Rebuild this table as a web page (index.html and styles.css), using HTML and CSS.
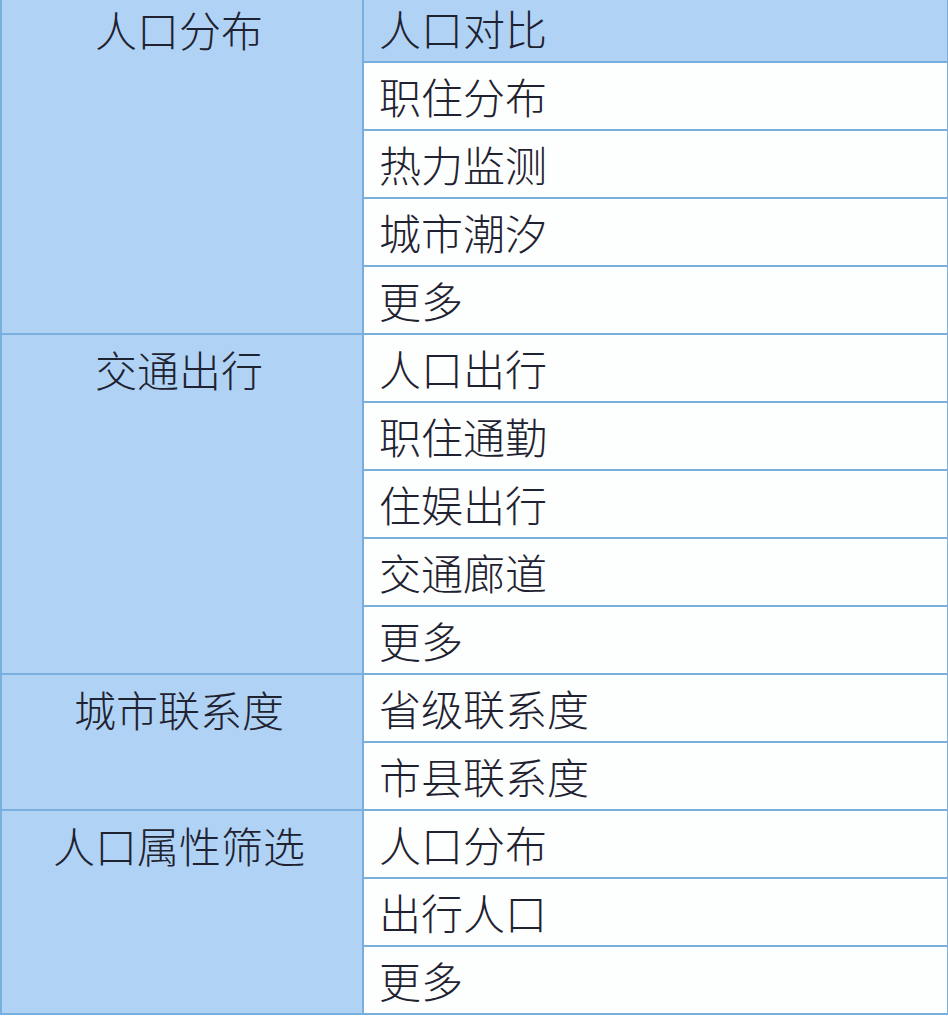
FILE: index.html
```html
<!DOCTYPE html>
<html lang="zh">
<head>
<meta charset="utf-8">
<title>功能列表</title>
<link rel="stylesheet" href="styles.css">
</head>
<body>
<table class="menu">
  <colgroup><col class="c1"><col class="c2"></colgroup>
  <tbody>
    <tr><td class="cat" rowspan="5">人口分布</td><td class="item hl">人口对比</td></tr>
    <tr><td class="item">职住分布</td></tr>
    <tr><td class="item">热力监测</td></tr>
    <tr><td class="item">城市潮汐</td></tr>
    <tr><td class="item">更多</td></tr>
    <tr><td class="cat" rowspan="5">交通出行</td><td class="item">人口出行</td></tr>
    <tr><td class="item">职住通勤</td></tr>
    <tr><td class="item">住娱出行</td></tr>
    <tr><td class="item">交通廊道</td></tr>
    <tr><td class="item">更多</td></tr>
    <tr><td class="cat" rowspan="2">城市联系度</td><td class="item">省级联系度</td></tr>
    <tr><td class="item">市县联系度</td></tr>
    <tr><td class="cat" rowspan="3">人口属性筛选</td><td class="item">人口分布</td></tr>
    <tr><td class="item">出行人口</td></tr>
    <tr><td class="item">更多</td></tr>
  </tbody>
</table>
</body>
</html>
```

FILE: styles.css
```css
html, body {
  margin: 0;
  padding: 0;
  background: #ffffff;
}
body {
  width: 948px;
  height: 1018px;
  overflow: hidden;
  font-family: "Noto Sans CJK SC", "Noto Sans", sans-serif;
}
.menu {
  border-collapse: collapse;
  table-layout: fixed;
  width: 947px;
  margin-top: -7px;
  color: #1f2230;
  font-size: 42px;
  font-weight: 300;
}
.c1 { width: 362px; }
.c2 { width: 585px; }
.menu td {
  border: 2px solid #78afdc;
  height: 66px;
  padding: 0;
  line-height: 66px;
  white-space: nowrap;
  overflow: hidden;
  vertical-align: top;
}
.cat {
  background: #b0d3f5;
  text-align: center;
  padding-right: 6px !important;
  padding-top: 1px !important;
  line-height: 65px !important;
}
.item {
  background: #fdfefe;
  padding-left: 15px !important;
}
.item.hl {
  background: #b0d3f5;
}
```
